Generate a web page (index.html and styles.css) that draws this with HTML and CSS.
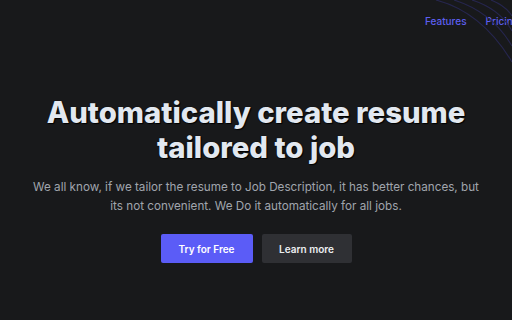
FILE: index.html
```html
<!DOCTYPE html>
<html lang="en">
<head>
<meta charset="utf-8">
<title>Resume</title>
<link rel="stylesheet" href="styles.css">
</head>
<body>
<svg class="arcs" width="90" height="80" viewBox="422 0 90 80" aria-hidden="true">
  <path d="M436 0 Q482 12 512 62" />
  <path d="M454 0 Q492 12 512 46" />
  <path d="M472 0 Q500 9 512 31" />
  <path d="M491 0 Q506 6 512 16" />
</svg>
<header class="top">
  <nav class="nav">
    <a href="#">Features</a>
    <a href="#">Pricing</a>
  </nav>
</header>
<main class="hero">
  <h1 class="title">Automatically create resume<br>tailored to job</h1>
  <p class="lead">We all know, if we tailor the resume to Job Description, it has better chances, but its not convenient. We Do it automatically for all jobs.</p>
  <div class="actions">
    <a class="btn btn-primary" href="#">Try for Free</a>
    <a class="btn btn-secondary" href="#">Learn more</a>
  </div>
</main>
</body>
</html>
```
FILE: styles.css
```css
html, body {
  margin: 0;
  padding: 0;
  width: 512px;
  height: 320px;
  overflow: hidden;
  background: #18191b;
  font-family: Inter, "Noto Sans", sans-serif;
}
body { position: relative; }
.arcs {
  position: absolute;
  top: 0;
  right: 0;
  fill: none;
  stroke: #26264e;
  stroke-width: 1.1;
}
.top {
  display: flex;
  justify-content: flex-end;
  height: 42px;
  align-items: center;
  margin-right: -7px;
}
.nav {
  display: flex;
  gap: 19px;
  font-size: 10px;
  font-weight: 500;
}
.nav a {
  color: #5d5ff0;
  text-decoration: none;
}
.hero {
  display: flex;
  flex-direction: column;
  align-items: center;
  text-align: center;
  padding-top: 53px;
}
.title {
  margin: 0;
  font-size: 29.3px;
  line-height: 35px;
  font-weight: 800;
  color: #e2e8f0;
  text-shadow: 0 0 1px #000, 1px 1px 1px #000;
}
.lead {
  margin: 13px 0 0;
  width: 460px;
  font-size: 11.7px;
  line-height: 18.5px;
  color: #a0a5ad;
}
.actions {
  display: flex;
  gap: 9px;
  margin-top: 19px;
}
.btn {
  display: flex;
  align-items: center;
  justify-content: center;
  height: 29px;
  border-radius: 2px;
  font-size: 10px;
  font-weight: 600;
  color: #fff;
  text-decoration: none;
}
.btn-primary { width: 92px; background: #5b5cf7; }
.btn-secondary { width: 90px; background: #2f3034; color: #eceef0; }
```
